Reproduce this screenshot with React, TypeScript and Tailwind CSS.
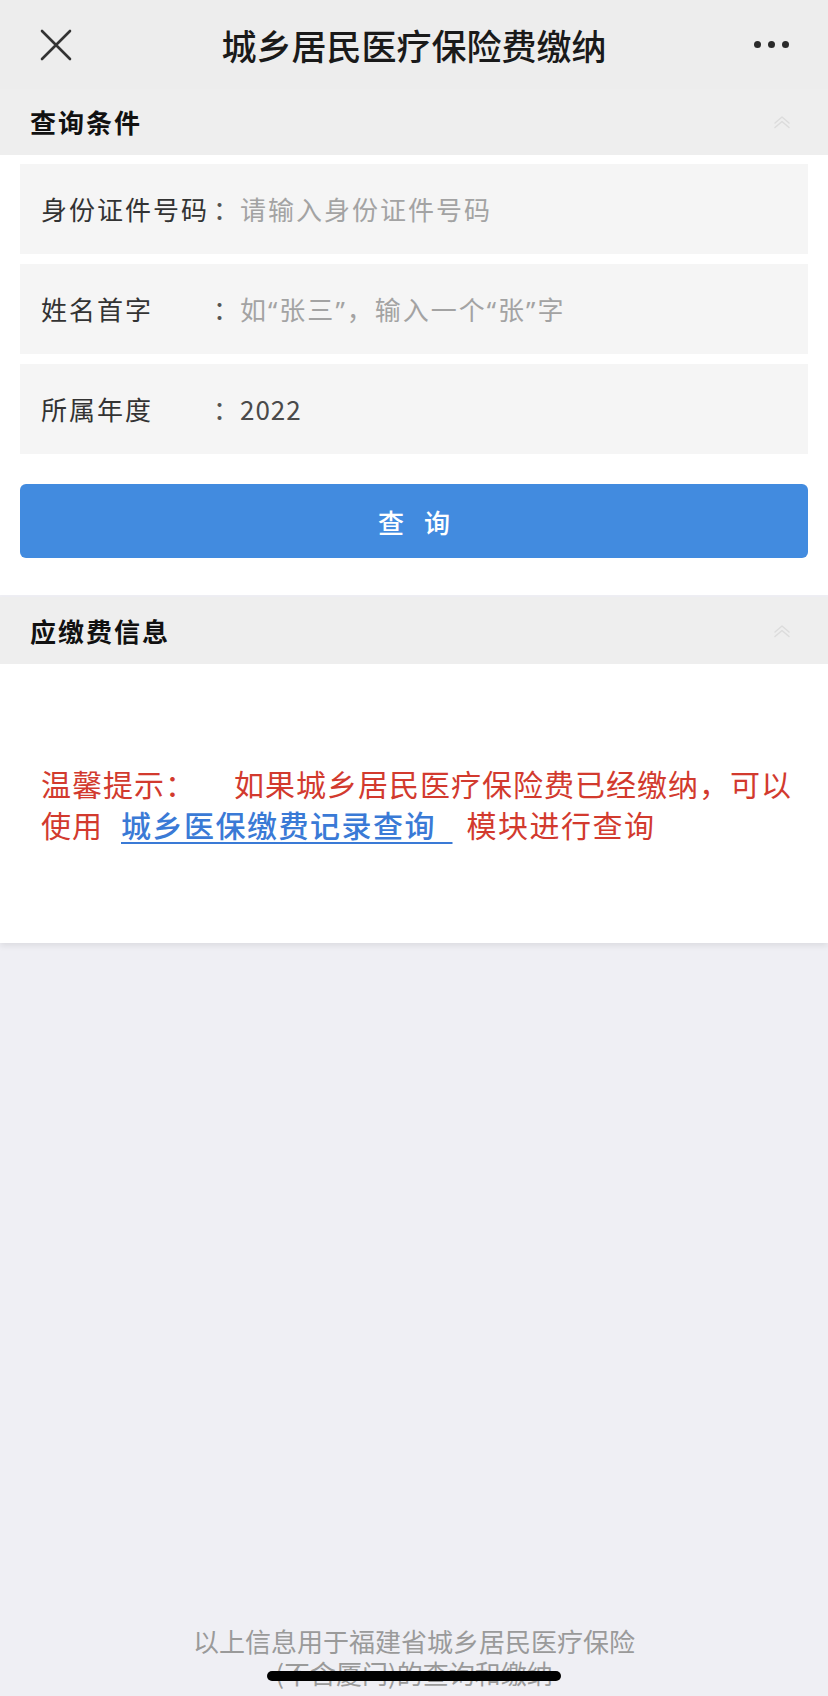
import React from "react";

function DoubleChevron() {
  return (
    <svg width="20" height="14" viewBox="0 0 20 14" fill="none">
      <path d="M3 8 L10 2 L17 8" stroke="#dcdcdc" strokeWidth="1.5" strokeLinecap="round" strokeLinejoin="round" />
      <path d="M3 12.5 L10 6.5 L17 12.5" stroke="#dcdcdc" strokeWidth="1.5" strokeLinecap="round" strokeLinejoin="round" />
    </svg>
  );
}

function Q({ c }: { c: string }) {
  return <span className="font-['Noto_Sans',sans-serif]">{c}</span>;
}

function FormRow({ label, children, placeholder }: { label: string; children: React.ReactNode; placeholder: boolean }) {
  return (
    <div className="flex h-[90px] items-center bg-[#f5f5f5] pl-[21px] text-[26px] leading-none tracking-[2px]">
      <div className="w-[172px] whitespace-nowrap text-[#333333]">{label}</div>
      <div className="w-[27px] text-[#555555]">：</div>
      <div className={placeholder ? "whitespace-nowrap text-[#a3a3a3]" : "whitespace-nowrap tracking-[1px] text-[#4a4a4a]"}>{children}</div>
    </div>
  );
}

export default function App() {
  return (
    <div className="relative flex min-h-[1696px] w-[828px] flex-col bg-[#efeff4] font-['Noto_Sans_CJK_SC','Noto_Sans',sans-serif]">
      {/* nav bar */}
      <div className="grid h-[89px] grid-cols-[120px_1fr_120px] items-center bg-[#ededed]">
        <div className="pl-[40px]">
          <svg width="32" height="32" viewBox="0 0 32 32" fill="none">
            <path d="M2 2 L30 30 M30 2 L2 30" stroke="#333333" strokeWidth="2.6" strokeLinecap="round" />
          </svg>
        </div>
        <div className="text-center text-[35px] font-medium leading-none text-[#1a1a1a]">城乡居民医疗保险费缴纳</div>
        <div className="flex justify-end gap-[7px] pr-[39px]">
          <span className="h-[7px] w-[7px] rounded-full bg-[#2b2b2b]" />
          <span className="h-[7px] w-[7px] rounded-full bg-[#2b2b2b]" />
          <span className="h-[7px] w-[7px] rounded-full bg-[#2b2b2b]" />
        </div>
      </div>

      {/* card 1 */}
      <div className="bg-white">
        <div className="flex h-[66px] items-center justify-between bg-[#eeeeee] pl-[30px] pr-[36px]">
          <span className="text-[26px] font-bold leading-none tracking-[2px] text-[#111111]">查询条件</span>
          <DoubleChevron />
        </div>
        <div className="flex flex-col px-[20px] pb-[37px] pt-[9px]">
          <div className="flex flex-col gap-[10px]">
            <FormRow label="身份证件号码" placeholder>请输入身份证件号码</FormRow>
            <FormRow label="姓名首字" placeholder>
              如<Q c="“" />张三<Q c="”" />，输入一个<Q c="“" />张<Q c="”" />字
            </FormRow>
            <FormRow label="所属年度" placeholder={false}>2022</FormRow>
          </div>
          <button className="mt-[30px] flex h-[74px] items-center justify-center gap-[20px] rounded-[6px] bg-[#428bdf] text-[26px] font-medium text-white">
            <span>查</span>
            <span>询</span>
          </button>
        </div>
      </div>

      {/* card 2 */}
      <div className="mt-[2px] bg-white shadow-[0_3px_6px_rgba(0,0,0,0.08)]">
        <div className="flex h-[67px] items-center justify-between bg-[#eeeeee] pl-[30px] pr-[36px]">
          <span className="text-[26px] font-bold leading-none tracking-[2px] text-[#111111]">应缴费信息</span>
          <DoubleChevron />
        </div>
        <div className="flex h-[279px] items-center px-[41px]">
          <div className="whitespace-nowrap text-[30px] leading-[41px] tracking-[1px] text-[#d23a2e]">
            <span>温馨提示：</span>
            <span className="inline-block w-[38px]" />
            <span>如果城乡居民医疗保险费已经缴纳，可以</span>
            <br />
            <span>使用</span>
            <span className="inline-block w-[18px]" />
            <span className="font-medium tracking-[1.5px] text-[#3a7ad6] underline decoration-[2px] underline-offset-[5px]">城乡医保缴费记录查询&nbsp;&nbsp;</span>
            <span className="inline-block w-[14px]" />
            <span className="tracking-[1.5px]">模块进行查询</span>
          </div>
        </div>
      </div>

      {/* footer */}
      <div className="mt-auto pb-[7px] text-center text-[26px] leading-[32px] text-[#9a9a9a]">
        <div>以上信息用于福建省城乡居民医疗保险</div>
        <div>(不含厦门)的查询和缴纳</div>
      </div>

      {/* home indicator */}
      <div className="absolute left-[267px] top-[1671px] h-[10px] w-[294px] rounded-full bg-black" />
    </div>
  );
}
